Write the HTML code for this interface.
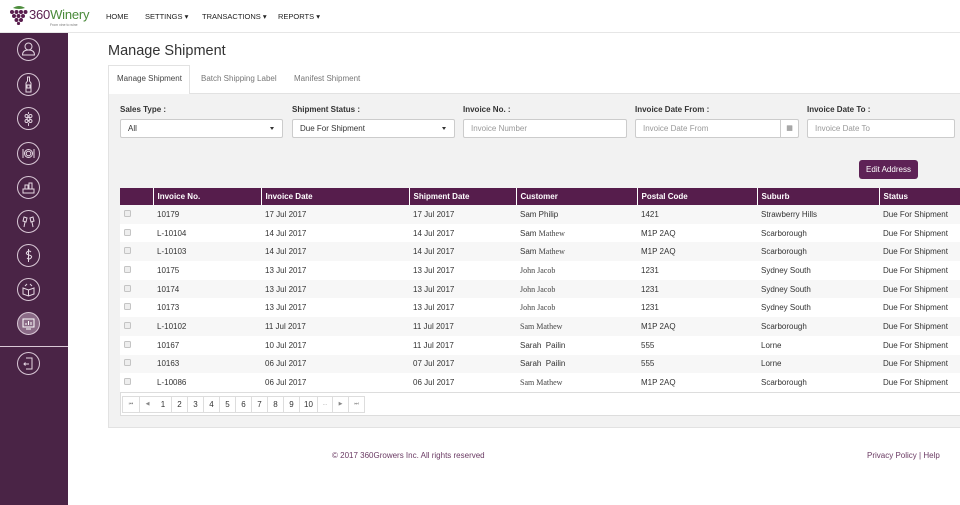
<!DOCTYPE html>
<html><head><meta charset="utf-8">
<style>
*{box-sizing:border-box;margin:0;padding:0}
body{width:960px;height:505px;overflow:hidden;background:#fff;font-family:"Liberation Sans",Arial,sans-serif;font-size:8.5px;color:#333;position:relative}
.abs{position:absolute}
#top{left:0;top:0;width:960px;height:33px;background:#fff;border-bottom:1px solid #e6e6e6}
.nav{top:12px;font-size:7.5px;color:#222}
#side{left:0;top:33px;width:68px;height:472px;background:#4a2446}
.ic{position:absolute;left:17px;width:23px;height:23px;border:1.2px solid #d9c8d6;border-radius:50%}
h1{position:absolute;left:108px;top:43px;font-size:14.5px;font-weight:normal;color:#333}
.tab{top:74px;font-size:8px;color:#777}
#panel{left:108px;top:93px;width:852px;height:335px;background:#f2f2f2;border:1px solid #e2e2e2;border-right:none}
.lbl{top:105px;font-size:8px;font-weight:bold;color:#333}
.inp{top:119px;height:19px;background:#fff;border:1px solid #ccc;border-radius:2px;font-size:8px;padding:4px 7px}
.ph{color:#999}
.caret{position:absolute;right:8px;top:7px;width:0;height:0;border-left:2.5px solid transparent;border-right:2.5px solid transparent;border-top:3.5px solid #333}
#btn{left:859px;top:160px;width:59px;height:19px;background:#5e2256;color:#fff;border-radius:3px;font-size:8px;text-align:center;line-height:19px}
#tbox{left:120px;top:188px;width:840px;height:228px;background:#fff;border:1px solid #ddd;border-right:none}
table{position:absolute;left:120px;top:188px;width:840px;border-collapse:collapse}
th{background:#561d4c;color:#fff;font-size:8px;text-align:left;height:17px;padding-left:4px;border-left:1px solid #fff}
th:first-child{border-left:none}
td{height:18.7px;font-size:8px;color:#333;padding-left:4px;background:#fff}
tr:nth-child(even) td{background:#f7f7f7}
.cb{display:inline-block;width:7px;height:7px;border:1px solid #c4c4c4;border-radius:1.5px;background:#eee}
.ser{font-family:"Liberation Serif",serif;font-size:8px;color:#444}
#pg{left:122px;top:396px;height:17px;display:flex;border:1px solid #ddd;background:#fff}
#pg span{display:block;height:15px;min-width:16px;text-align:center;line-height:15px;font-size:8px;color:#333;border-left:1px solid #ddd}
#pg span.s{color:#888;font-size:5px}
#pg span:first-child{border-left:none}
.foot{top:451px;font-size:8px;color:#6a3a63}
</style></head><body>
<div id="top" class="abs">
  <svg class="abs" style="left:7px;top:5px" width="24" height="20" viewBox="0 0 24 20">
    <path d="M6 3 q6-4 12 0 q-6 2-12 0z" fill="#4c8c3c"/>
    <g fill="#5a1e4e"><circle cx="5" cy="7" r="2"/><circle cx="9.5" cy="7" r="2"/><circle cx="14" cy="7" r="2"/><circle cx="18.5" cy="7" r="2"/><circle cx="7" cy="11" r="2"/><circle cx="11.5" cy="11" r="2"/><circle cx="16" cy="11" r="2"/><circle cx="9.5" cy="15" r="2"/><circle cx="14" cy="15" r="2"/><circle cx="11.5" cy="18.5" r="1.6"/></g>
  </svg>
  <div class="abs" style="left:29px;top:7px;font-size:13px;color:#5a1e4e;letter-spacing:-0.2px">360<span style="color:#4a8a3a">Winery</span></div>
  <div class="abs" style="left:50px;top:23px;font-size:3.5px;color:#777">From vine to wine</div>
  <div class="abs nav" style="left:106px">HOME</div>
  <div class="abs nav" style="left:145px">SETTINGS ▾</div>
  <div class="abs nav" style="left:202px">TRANSACTIONS ▾</div>
  <div class="abs nav" style="left:278px">REPORTS ▾</div>
</div>
<div id="side" class="abs">
  <div class="ic" style="top:5px"><svg width="21" height="21" viewBox="0 0 21 21" fill="none" stroke="#e5d8e3" stroke-width="1"><circle cx="10.5" cy="7.5" r="3.5"/><path d="M4.5 16 q0-5 6-5 q6 0 6 5z"/></svg></div>
  <div class="ic" style="top:40px"><svg width="21" height="21" viewBox="0 0 21 21" fill="none" stroke="#e5d8e3" stroke-width="1"><path d="M9.5 3h2v4l1.5 2v9h-5v-9l1.5-2z"/><rect x="9" y="11" width="3" height="3"/></svg></div>
  <div class="ic" style="top:74px"><svg width="21" height="21" viewBox="0 0 21 21" fill="none" stroke="#e5d8e3" stroke-width="0.9"><circle cx="8.5" cy="8" r="1.5"/><circle cx="12.5" cy="8" r="1.5"/><circle cx="10.5" cy="11" r="1.5"/><circle cx="8.5" cy="13" r="1.5"/><circle cx="12.5" cy="13" r="1.5"/><path d="M10.5 4v2M10.5 15v3"/></svg></div>
  <div class="ic" style="top:109px"><svg width="21" height="21" viewBox="0 0 21 21" fill="none" stroke="#e5d8e3" stroke-width="1"><circle cx="10.5" cy="10.5" r="4"/><circle cx="10.5" cy="10.5" r="2.3"/><path d="M5 6v9M16 6v9"/></svg></div>
  <div class="ic" style="top:143px"><svg width="21" height="21" viewBox="0 0 21 21" fill="none" stroke="#e5d8e3" stroke-width="1"><rect x="5" y="12" width="11" height="4"/><rect x="7" y="8" width="3" height="4"/><rect x="11" y="6" width="3" height="6"/></svg></div>
  <div class="ic" style="top:177px"><svg width="21" height="21" viewBox="0 0 21 21" fill="none" stroke="#e5d8e3" stroke-width="1"><path d="M6 6l3 1-1 4-3-1zM15 6l-3 1 1 4 3-1zM7 11l-1 5M14 11l1 5"/></svg></div>
  <div class="ic" style="top:211px"><svg width="21" height="21" viewBox="0 0 21 21" fill="none" stroke="#e5d8e3" stroke-width="1"><path d="M13 7q-2-2-4 0t2 3 2 3-4 0M10.5 4v13"/></svg></div>
  <div class="ic" style="top:245px"><svg width="21" height="21" viewBox="0 0 21 21" fill="none" stroke="#e5d8e3" stroke-width="1"><path d="M5 9l5.5 2 5.5-2v6l-5.5 2-5.5-2zM10.5 11v6M7 7l2-2M14 7l-2-2"/></svg></div>
  <div class="ic" style="top:279px;background:#8a6a86"><svg width="21" height="21" viewBox="0 0 21 21" fill="none" stroke="#fff" stroke-width="1"><rect x="5" y="6" width="11" height="8"/><path d="M8 12v-2M10.5 12v-4M13 12v-3M8 16h5"/></svg></div>
  <div class="abs" style="left:0;top:313px;width:68px;height:1px;background:#d9c8d6"></div>
  <div class="ic" style="top:319px"><svg width="21" height="21" viewBox="0 0 21 21" fill="none" stroke="#e5d8e3" stroke-width="1"><path d="M8 5h6v11h-6M11 11h-5M7.5 9.5l-1.5 1.5 1.5 1.5"/></svg></div>
</div>
<h1>Manage Shipment</h1>
<div class="abs" style="left:108px;top:65px;width:82px;height:29px;background:#fff;border:1px solid #e2e2e2;border-bottom:none;z-index:2"></div>
<div class="abs tab" style="left:117px;color:#444;z-index:3">Manage Shipment</div>
<div class="abs tab" style="left:201px">Batch Shipping Label</div>
<div class="abs tab" style="left:294px">Manifest Shipment</div>
<div id="panel" class="abs"></div>
<div class="abs lbl" style="left:120px">Sales Type :</div>
<div class="abs lbl" style="left:292px">Shipment Status :</div>
<div class="abs lbl" style="left:463px">Invoice No. :</div>
<div class="abs lbl" style="left:635px">Invoice Date From :</div>
<div class="abs lbl" style="left:807px">Invoice Date To :</div>
<div class="abs inp" style="left:120px;width:163px">All<span class="caret"></span></div>
<div class="abs inp" style="left:292px;width:163px">Due For Shipment<span class="caret"></span></div>
<div class="abs inp ph" style="left:463px;width:164px">Invoice Number</div>
<div class="abs inp ph" style="left:635px;width:164px">Invoice Date From<span class="abs" style="right:0;top:0;width:18px;height:17px;border-left:1px solid #ccc;text-align:center;line-height:17px;color:#777;font-size:7px">▦</span></div>
<div class="abs inp ph" style="left:807px;width:148px">Invoice Date To</div>
<div id="btn" class="abs">Edit Address</div>
<div id="tbox" class="abs"></div>
<table>
<colgroup><col style="width:33px"><col style="width:108px"><col style="width:148px"><col style="width:107px"><col style="width:121px"><col style="width:120px"><col style="width:122px"><col></colgroup>
<tr><th></th><th>Invoice No.</th><th>Invoice Date</th><th>Shipment Date</th><th>Customer</th><th>Postal Code</th><th>Suburb</th><th>Status</th></tr>
<tr><td><span class="cb"></span></td><td>10179</td><td>17 Jul 2017</td><td>17 Jul 2017</td><td>Sam Philip</td><td>1421</td><td>Strawberry Hills</td><td>Due For Shipment</td></tr>
<tr><td><span class="cb"></span></td><td>L-10104</td><td>14 Jul 2017</td><td>14 Jul 2017</td><td>Sam <span class="ser">Mathew</span></td><td>M1P 2AQ</td><td>Scarborough</td><td>Due For Shipment</td></tr>
<tr><td><span class="cb"></span></td><td>L-10103</td><td>14 Jul 2017</td><td>14 Jul 2017</td><td>Sam <span class="ser">Mathew</span></td><td>M1P 2AQ</td><td>Scarborough</td><td>Due For Shipment</td></tr>
<tr><td><span class="cb"></span></td><td>10175</td><td>13 Jul 2017</td><td>13 Jul 2017</td><td class="ser">John Jacob</td><td>1231</td><td>Sydney South</td><td>Due For Shipment</td></tr>
<tr><td><span class="cb"></span></td><td>10174</td><td>13 Jul 2017</td><td>13 Jul 2017</td><td class="ser">John Jacob</td><td>1231</td><td>Sydney South</td><td>Due For Shipment</td></tr>
<tr><td><span class="cb"></span></td><td>10173</td><td>13 Jul 2017</td><td>13 Jul 2017</td><td class="ser">John Jacob</td><td>1231</td><td>Sydney South</td><td>Due For Shipment</td></tr>
<tr><td><span class="cb"></span></td><td>L-10102</td><td>11 Jul 2017</td><td>11 Jul 2017</td><td class="ser">Sam Mathew</td><td>M1P 2AQ</td><td>Scarborough</td><td>Due For Shipment</td></tr>
<tr><td><span class="cb"></span></td><td>10167</td><td>10 Jul 2017</td><td>11 Jul 2017</td><td>Sarah&nbsp; Pailin</td><td>555</td><td>Lorne</td><td>Due For Shipment</td></tr>
<tr><td><span class="cb"></span></td><td>10163</td><td>06 Jul 2017</td><td>07 Jul 2017</td><td>Sarah&nbsp; Pailin</td><td>555</td><td>Lorne</td><td>Due For Shipment</td></tr>
<tr><td><span class="cb"></span></td><td>L-10086</td><td>06 Jul 2017</td><td>06 Jul 2017</td><td class="ser">Sam Mathew</td><td>M1P 2AQ</td><td>Scarborough</td><td>Due For Shipment</td></tr>
</table>
<div class="abs" style="left:120px;top:392px;width:840px;height:1px;background:#ddd"></div>
<div id="pg" class="abs"><span class="s">⏮</span><span class="s">◀</span><span style="border-left:none">1</span><span>2</span><span>3</span><span>4</span><span>5</span><span>6</span><span>7</span><span>8</span><span>9</span><span style="min-width:18px">10</span><span class="s" style="min-width:15px">...</span><span class="s">▶</span><span class="s">⏭</span></div>
<div class="abs foot" style="left:332px">© 2017 360Growers Inc. All rights reserved</div>
<div class="abs foot" style="left:867px">Privacy Policy | Help</div>
</body></html>
